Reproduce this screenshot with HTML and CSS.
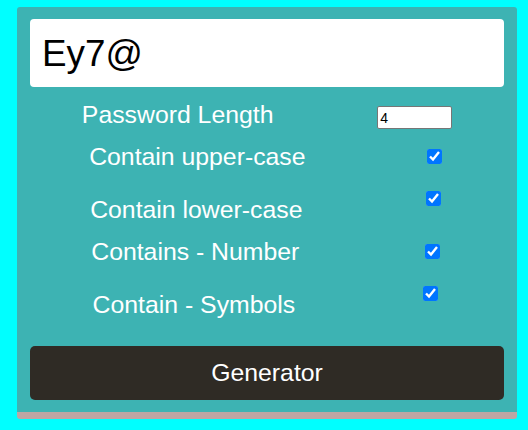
FILE: index.html
```html
<!DOCTYPE html>
<html lang="en">
<head>
<meta charset="utf-8">
<title>Password Generator</title>
<link rel="stylesheet" href="styles.css">
</head>
<body>
  <div class="card">
    <div class="output">Ey7@</div>

    <div class="row row-length">
      <label class="label" for="len">Password Length</label>
      <input class="num" id="len" type="number" value="4">
    </div>

    <div class="row row-a">
      <label class="label" for="up">Contain upper-case</label>
      <input class="check" id="up" type="checkbox" checked>
    </div>

    <div class="row row-b">
      <label class="label" for="low">Contain lower-case</label>
      <input class="check" id="low" type="checkbox" checked>
    </div>

    <div class="row row-a">
      <label class="label" for="numb">Contains - Number</label>
      <input class="check" id="numb" type="checkbox" checked>
    </div>

    <div class="row row-b">
      <label class="label" for="sym">Contain - Symbols</label>
      <input class="check" id="sym" type="checkbox" checked>
    </div>

    <button class="btn" type="button">Generator</button>
  </div>
</body>
</html>
```

FILE: styles.css
```css
html, body {
  margin: 0;
  padding: 0;
  background: #00ffff;
}

body {
  padding: 7px 11px 0 17px;
  font-family: "Liberation Sans", Arial, sans-serif;
}

.card {
  width: 500px;
  box-sizing: border-box;
  background: #3db3b3;
  border-radius: 3px;
  border-bottom: 7px solid #bda6a4;
  padding: 12px 13px 12px 13px;
}

.output {
  height: 68px;
  box-sizing: border-box;
  background: #ffffff;
  border-radius: 4px;
  padding: 2px 12px 0 12px;
  font-size: 36.8px;
  line-height: 66px;
  color: #000;
}

.row {
  display: flex;
  justify-content: space-around;
  align-items: flex-start;
}

.label {
  color: #ffffff;
  font-size: 24.8px;
  line-height: 28px;
  margin: 0;
}

.row-length {
  padding-top: 14px;
}

.num {
  width: 75px;
  height: 23px;
  box-sizing: border-box;
  margin: 5px 0 0 0;
  padding: 1px 2px;
  border: 1px solid #767676;
  border-radius: 2px;
  font-family: "Liberation Sans", Arial, sans-serif;
  font-size: 14px;
  color: #000;
  background: #fff;
}

.check {
  width: 15px;
  height: 15px;
  margin: 0 3px 0 3px;
  accent-color: #0075ff;
}

.row-a {
  padding-top: 14px;
}

.row-a .check {
  margin-top: 6px;
}

.row-b {
  padding-top: 20px;
}

.row-b .label {
  margin-top: 5px;
}

.btn {
  display: block;
  width: 100%;
  height: 54px;
  margin-top: 27px;
  border: none;
  border-radius: 5px;
  background: #2f2b25;
  color: #ffffff;
  font-family: "Liberation Sans", Arial, sans-serif;
  font-size: 24.8px;
  padding: 0;
}
```
